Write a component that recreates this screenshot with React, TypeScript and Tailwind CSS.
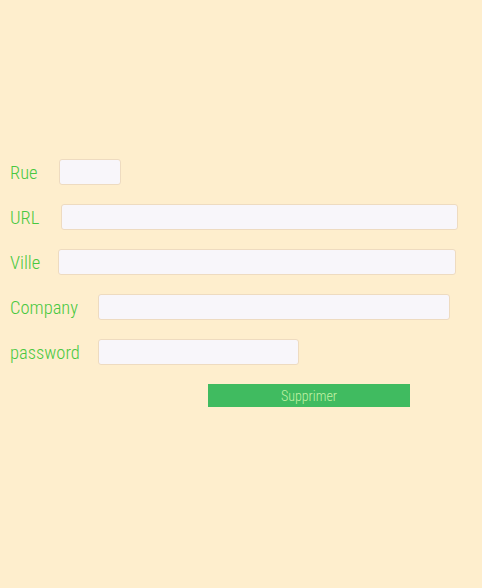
import React from "react";

const rows: { label: string; lw: string; w: string; type?: string }[] = [
  { label: "Rue", lw: "w-[49px]", w: "w-[62px]" },
  { label: "URL", lw: "w-[51px]", w: "w-[397px]" },
  { label: "Ville", lw: "w-[48px]", w: "w-[398px]" },
  { label: "Company", lw: "w-[88px]", w: "w-[352px]" },
  { label: "password", lw: "w-[88px]", w: "w-[201px]", type: "password" },
];

export default function App() {
  return (
    <div
      className="min-h-[588px] w-full bg-[#feeecd] pl-[10px] pt-[159px] font-stretch-[75%]"
      style={{ fontFamily: 'Roboto, "Liberation Sans Narrow", sans-serif' }}
    >
      <div className="flex flex-col gap-[19px]">
        {rows.map((r) => (
          <div key={r.label} className="flex items-center h-[26px]">
            <label className={`${r.lw} shrink-0 pt-[2px] text-[18.5px] leading-none font-light text-[#48c840] whitespace-nowrap`}>{r.label}</label>
            <input
              type={r.type ?? "text"}
              className={`${r.w} h-[26px] rounded-[3px] border border-[#eedbc0] bg-[#f8f6fa] outline-none`}
            />
          </div>
        ))}
        <div className="pl-[198px] flex">
          <button className="block w-[202px] h-[23px] bg-[#40bb60] text-[14px] leading-none font-light text-[#c2f2a4]">
            Supprimer
          </button>
        </div>
      </div>
    </div>
  );
}
